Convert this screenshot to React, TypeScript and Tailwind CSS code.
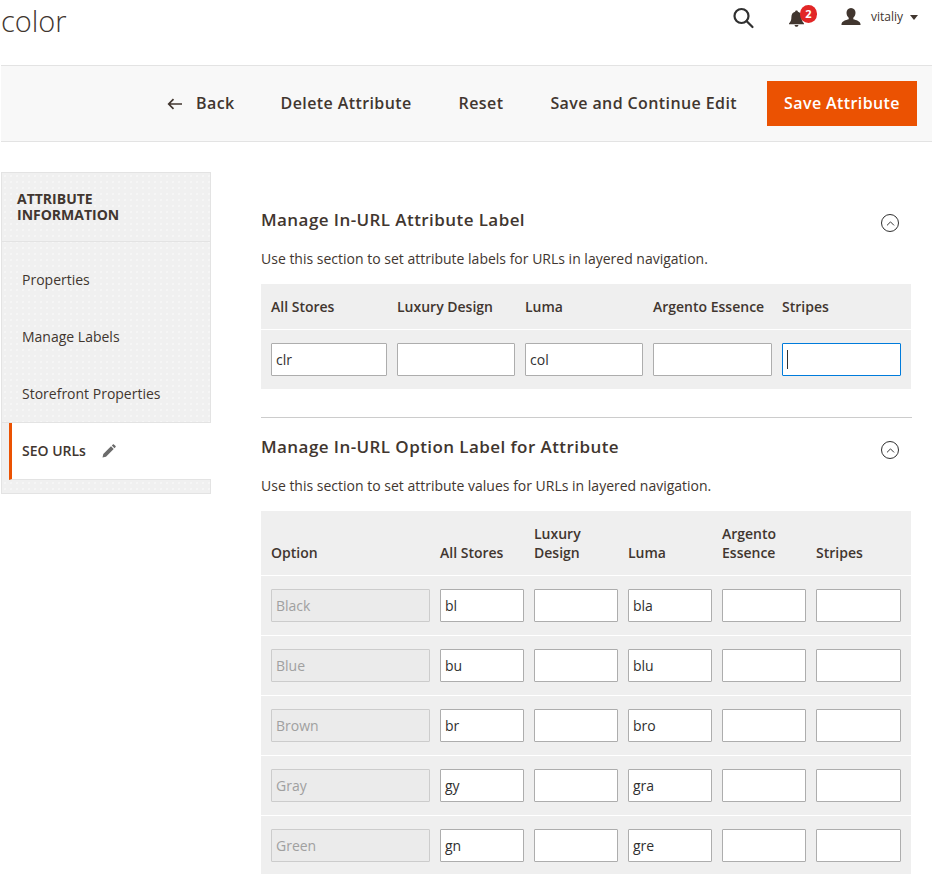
import React from "react";
import { ChevronUp } from "lucide-react";

const labelCols = ["All Stores", "Luxury Design", "Luma", "Argento Essence", "Stripes"];
const optionCols = ["All Stores", "Luxury Design", "Luma", "Argento Essence", "Stripes"];
const options = [
  { name: "Black", all: "bl", luma: "bla" },
  { name: "Blue", all: "bu", luma: "blu" },
  { name: "Brown", all: "br", luma: "bro" },
  { name: "Gray", all: "gy", luma: "gra" },
  { name: "Green", all: "gn", luma: "gre" },
];

const dots = "bg-[#f0f0f0] bg-[radial-gradient(#f8f8f8_0.6px,transparent_0.9px)] bg-[length:6px_6px]";

const Field = ({ value = "", focused = false }: { value?: string; focused?: boolean }) => (
  <div
    className={
      "h-[33px] bg-white border rounded-[1px] px-[4px] flex items-center text-sm text-[#303030] " +
      (focused ? "border-[#007bdb]" : "border-[#adadad]")
    }
  >
    {value}
    {focused && <span className="w-px h-[19px] bg-[#303030]"></span>}
  </div>
);

const SectionHead = ({ title, text }: { title: string; text: string }) => (
  <div>
    <div className="flex items-center justify-between pr-[13px]">
      <h2 className="text-[17px] leading-6 font-semibold tracking-[0.025em] text-[#41362f]">{title}</h2>
      <span className="mt-[7px] w-[18px] h-[18px] rounded-full border border-[#303030] flex items-center justify-center text-[#303030]">
        <ChevronUp size={13} strokeWidth={1.8} />
      </span>
    </div>
    <p className="mt-[17px] text-sm leading-5 text-[#41362f]">{text}</p>
  </div>
);

export default function App() {
  return (
    <div className="h-screen overflow-hidden bg-white font-['Open_Sans',sans-serif] text-[#41362f]">
      {/* page header */}
      <div className="h-[65px] flex justify-between pl-px">
        <h1 className="text-[29px] leading-[42px] font-light text-[#41362f]">color</h1>
        <div className="flex items-start pt-[5px] pr-[14px]">
          <svg width="24" height="24" viewBox="0 0 24 24" fill="none" stroke="#303030" strokeWidth="2.2" className="mt-px" strokeLinecap="round">
            <circle cx="10.5" cy="10" r="7" />
            <path d="M15.5 15l6 6" />
          </svg>
          <div className="relative ml-[33px] mt-[5px]">
            <svg width="17" height="17" viewBox="0 0 17 17" fill="#41362f">
              <path d="M8.5 0.5c.8 0 1.3.5 1.4 1.2C12.3 2.3 13.6 4.200 13.6 7c0 3 .6 4.600 2.400 6.500v.8H1v-.8C2.800 11.600 3.400 10 3.400 7c0-2.800 1.300-4.700 3.700-5.300C7.200 1 7.700.5 8.500.5zM6.600 15h3.800c0 1-.8 1.800-1.900 1.800S6.600 16 6.600 15z" />
            </svg>
            <span className="absolute left-[12px] top-[-5px] w-[17px] h-[18px] rounded-full bg-[#e22626] text-white text-[11px] leading-[18px] font-bold text-center">2</span>
          </div>
          <svg width="22" height="20" viewBox="0 0 22 20" fill="#41362f" className="ml-[35px] mt-[2px]">
            <path d="M11 1c3 0 4.500 2.200 4.500 4.800 0 2.200-1 4-2.200 5v1.500c2.800.8 6.700 1.800 7.200 4.700v1H1.500v-1c.5-2.900 4.400-3.900 7.200-4.700v-1.500c-1.200-1-2.200-2.800-2.200-5C6.500 3.200 8 1 11 1z" />
          </svg>
          <span className="ml-[9px] mt-[3px] text-xs leading-[18px] text-[#41362f]">vitaliy</span>
          <span className="ml-[7px] mt-[10px] w-0 h-0 border-x-[4px] border-x-transparent border-t-[5px] border-t-[#41362f]"></span>
        </div>
      </div>

      {/* action bar */}
      <div className="ml-px h-[77px] bg-[#f8f8f8] border-y border-[#e3e3e3] flex items-center justify-end pr-[15px] text-base font-semibold tracking-[0.025em] text-[#41362f]">
        <svg width="16" height="12" viewBox="0 0 16 12" fill="none" stroke="#41362f" strokeWidth="1.700" className="mr-[13px]">
          <path d="M15 6H2M6.500 1.200L1.700 6l4.800 4.800" />
        </svg>
        <span className="pb-[2px]">Back</span>
        <span className="ml-[46px] pb-[2px]">Delete Attribute</span>
        <span className="ml-[47px] pb-[2px]">Reset</span>
        <span className="ml-[47px] pb-[2px]">Save and Continue Edit</span>
        <span className="ml-[30px] h-[45px] w-[150px] pb-[2px] bg-[#eb5202] text-white flex items-center justify-center">Save Attribute</span>
      </div>

      <div className="flex mt-[30px] pl-px">
        {/* sidebar */}
        <aside className="w-[210px] shrink-0">
          <div className={"border border-[#e3e3e3] border-b-0 " + dots}>
            <div className="h-[69px] px-[15px] pt-[18px] text-sm leading-4 font-bold text-[#41362f] border-b border-[#e3e3e3]">
              <span className="block">ATTRIBUTE</span>
              <span className="block">INFORMATION</span>
            </div>
            <div className="pt-[9px] border-b border-[#e3e3e3]">
              <div className="h-[57px] pl-5 flex items-center text-sm">Properties</div>
              <div className="h-[57px] pl-5 flex items-center text-sm">Manage Labels</div>
              <div className="h-[57px] pl-5 flex items-center text-sm">Storefront Properties</div>
            </div>
          </div>
          <div className="bg-[#f0f0f0] border-l border-[#e3e3e3]">
            <div className="h-[57px] ml-[7px] bg-white border-l-[3px] border-[#eb5202] border-b border-b-[#e3e3e3] pl-[10px] flex items-center text-sm font-semibold text-[#41362f]">
              SEO URLs
              <svg width="16" height="16" viewBox="0 0 16 16" fill="#6b6b6b" className="ml-[15px]">
                <path d="M1.500 14.500l.8-3.500 7.700-7.700 2.700 2.700-7.700 7.700zM10.800 2.500l1.100-1.100c.3-.3.700-.3 1 0l1.700 1.700c.3.300.3.700 0 1l-1.100 1.100z" />
              </svg>
            </div>
          </div>
          <div className={"h-[14px] border border-[#e3e3e3] border-t-0 " + dots}></div>
        </aside>

        {/* content */}
        <main className="ml-[50px] w-[651px] pt-[35px]">
          <SectionHead title="Manage In-URL Attribute Label" text="Use this section to set attribute labels for URLs in layered navigation." />

          <div className="mt-[15px] w-[650px] bg-[#efefef]">
            <div className="h-[46px] border-b border-white grid grid-cols-[116px_118px_118px_119px_119px] gap-x-[10px] px-[10px] items-center text-sm font-semibold text-[#41362f]">
              {labelCols.map((c) => (
                <span key={c} className="whitespace-nowrap">{c}</span>
              ))}
            </div>
            <div className="h-[59px] grid grid-cols-[116px_118px_118px_119px_119px] gap-x-[10px] px-[10px] items-center">
              <Field value="clr" />
              <Field />
              <Field value="col" />
              <Field />
              <Field focused />
            </div>
          </div>

          <div className="mt-[28px] border-t border-[#cccccc] pt-[16px]">
            <SectionHead title="Manage In-URL Option Label for Attribute" text="Use this section to set attribute values for URLs in layered navigation." />
          </div>

          <div className="mt-[15px] w-[650px] bg-[#efefef]">
            <div className="h-[65px] border-b border-white grid grid-cols-[159px_84px_84px_84px_84px_85px] gap-x-[10px] px-[10px] items-end pb-[13px] text-sm leading-[19px] font-semibold text-[#41362f]">
              <span>Option</span>
              {optionCols.map((c) => (
                <span key={c}>{c}</span>
              ))}
            </div>
            {options.map((o) => (
              <div key={o.name} className="h-[60px] border-b border-white grid grid-cols-[159px_84px_84px_84px_84px_85px] gap-x-[10px] px-[10px] items-center">
                <div className="h-[33px] bg-[#ebebeb] border border-[#cccccc] rounded-[1px] px-[4px] flex items-center text-sm text-[#a0a0a0]">{o.name}</div>
                <Field value={o.all} />
                <Field />
                <Field value={o.luma} />
                <Field />
                <Field />
              </div>
            ))}
          </div>
        </main>
      </div>
    </div>
  );
}
